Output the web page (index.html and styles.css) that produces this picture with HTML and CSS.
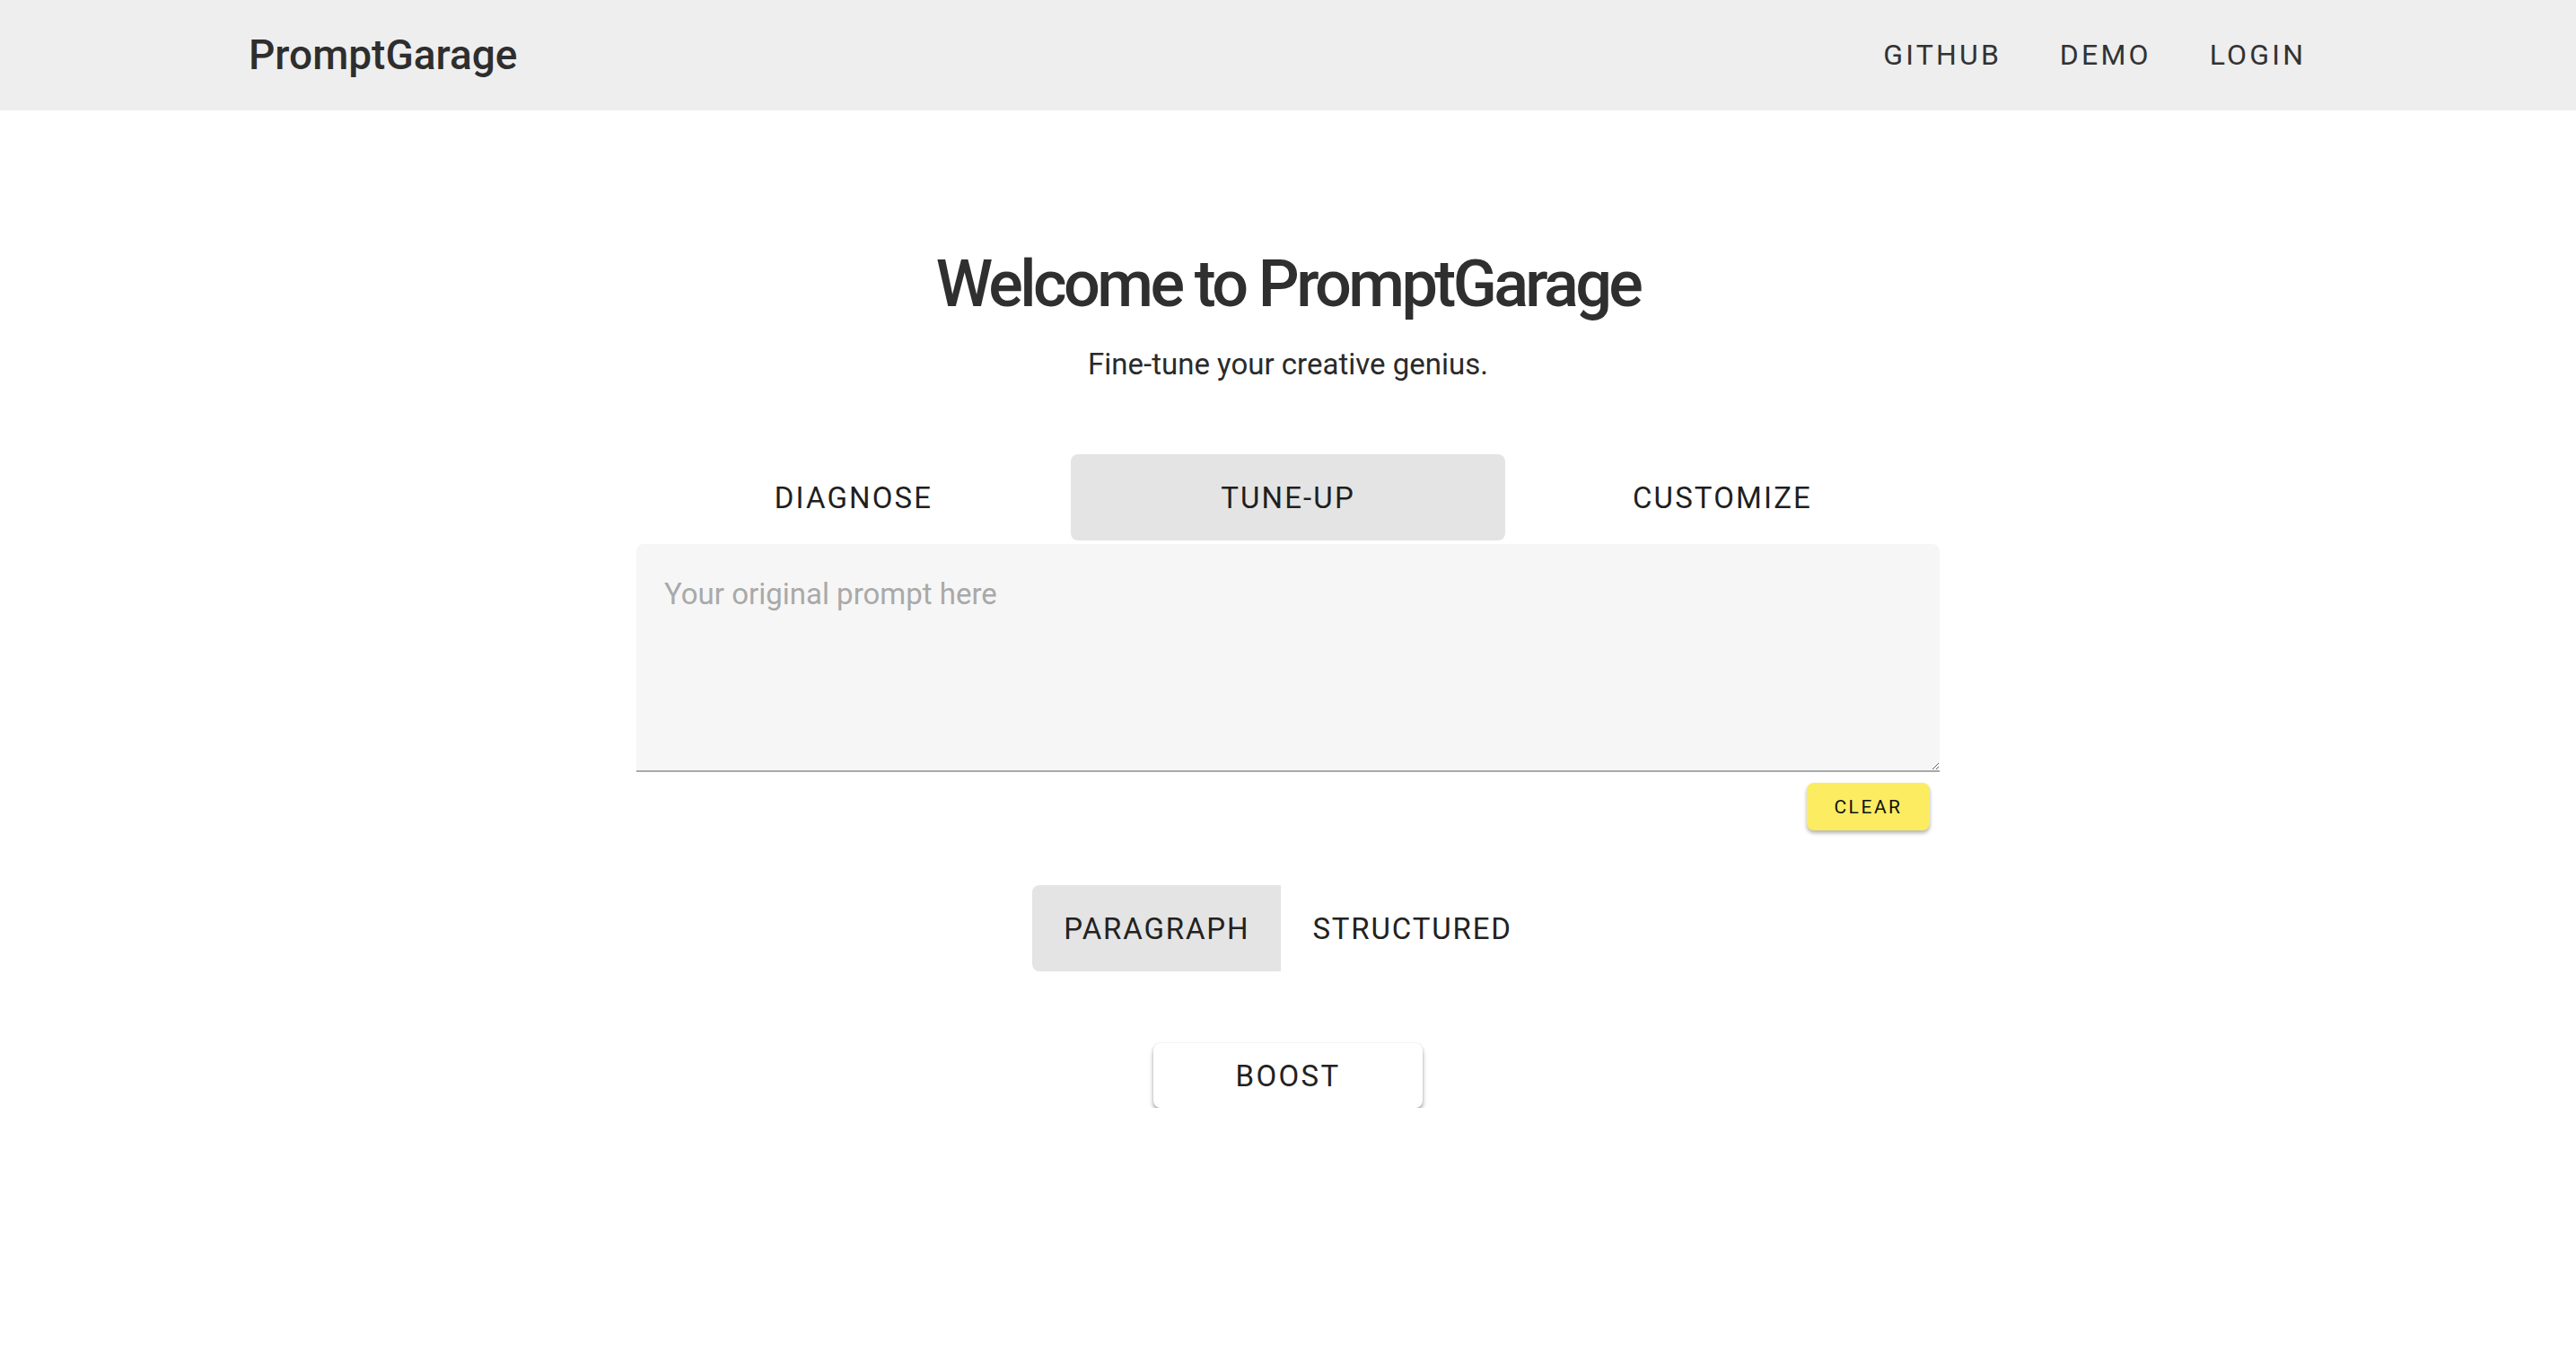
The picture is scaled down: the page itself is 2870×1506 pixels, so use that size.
FILE: index.html
```html
<!DOCTYPE html>
<html lang="en">
<head>
<meta charset="utf-8">
<title>PromptGarage</title>
<link rel="stylesheet" href="styles.css">
</head>
<body>
<header class="topbar">
  <div class="logo">PromptGarage</div>
  <nav class="nav">
    <a class="nav-link">GITHUB</a>
    <a class="nav-link">DEMO</a>
    <a class="nav-link">LOGIN</a>
  </nav>
</header>
<main class="main">
  <h1 class="title">Welcome to PromptGarage</h1>
  <p class="subtitle">Fine-tune your creative genius.</p>
  <section class="panel">
    <div class="tabs">
      <button class="tab">DIAGNOSE</button>
      <button class="tab tab-active">TUNE-UP</button>
      <button class="tab">CUSTOMIZE</button>
    </div>
    <textarea class="prompt" placeholder="Your original prompt here"></textarea>
    <div class="clear-row">
      <button class="clear-btn">CLEAR</button>
    </div>
  </section>
  <div class="toggle">
    <button class="toggle-btn toggle-active">PARAGRAPH</button>
    <button class="toggle-btn">STRUCTURED</button>
  </div>
  <button class="boost">BOOST</button>
</main>
</body>
</html>
```
FILE: styles.css
```css
html, body {
  margin: 0;
  padding: 0;
  background: #ffffff;
}
body {
  font-family: Roboto, "Liberation Sans", sans-serif;
  color: #333333;
}
button {
  font-family: inherit;
  border: none;
  background: none;
  cursor: pointer;
  padding: 0;
  margin: 0;
}
.topbar {
  height: 123px;
  background: #eeeeee;
  display: flex;
  align-items: center;
  justify-content: space-between;
  padding: 0 304px 0 277px;
}
.logo {
  font-size: 46px;
  font-weight: 500;
  letter-spacing: 0;
  color: #2e2e2e;
  line-height: 1;
  margin-top: -2px;
}
.nav {
  display: flex;
  gap: 68px;
  align-items: center;
}
.nav-link {
  font-size: 32px;
  letter-spacing: 0.1em;
  margin-right: -0.1em;
  color: #333;
  line-height: 1;
  margin-top: -2px;
}
.main {
  display: flex;
  flex-direction: column;
  align-items: center;
  padding-top: 151px;
}
.title {
  margin: 0;
  font-size: 72px;
  line-height: 86px;
  font-weight: 500;
  letter-spacing: -0.05em;
  color: #2f2f2f;
}
.subtitle {
  margin: 27px 0 0 0;
  font-size: 33px;
  line-height: 38px;
  color: #2a2a2a;
}
.panel {
  width: 1452px;
  margin-top: 81px;
  display: flex;
  flex-direction: column;
}
.tabs {
  display: grid;
  grid-template-columns: repeat(3, 1fr);
}
.tab {
  height: 96px;
  font-size: 33px;
  letter-spacing: 0.065em;
  color: #1f1f1f;
  border-radius: 8px;
}
.tab-active {
  background: #e4e4e4;
}
.prompt {
  margin-top: 4px;
  height: 254px;
  box-sizing: border-box;
  background: #f6f6f6;
  border: none;
  border-bottom: 2px solid #a9a9a9;
  border-radius: 8px 8px 0 0;
  padding: 31px 31px;
  font-family: inherit;
  font-size: 33px;
  line-height: 1.5;
  color: #333;
  outline: none;
  resize: vertical;
}
.prompt::placeholder {
  color: #a9a9a9;
}
.clear-row {
  display: flex;
  justify-content: flex-end;
  padding-right: 11px;
  margin-top: 12px;
}
.clear-btn {
  width: 137px;
  height: 53px;
  background: #fcec62;
  border-radius: 8px;
  font-size: 21px;
  letter-spacing: 0.12em;
  color: #111;
  box-shadow: 0 3px 4px rgba(0,0,0,0.3);
}
.toggle {
  display: flex;
  margin-top: 61px;
}
.toggle-btn {
  height: 96px;
  padding: 0 35px;
  font-size: 33px;
  letter-spacing: 0.056em;
  color: #222;
}
.toggle-active {
  background: #e4e4e4;
  border-radius: 8px 0 0 8px;
}
.boost {
  margin-top: 80px;
  width: 300px;
  height: 72px;
  background: #ffffff;
  border-radius: 8px;
  font-size: 33px;
  letter-spacing: 0.07em;
  color: #222;
  box-shadow: 0 4px 5px rgba(0,0,0,0.35), 0 0 2px rgba(0,0,0,0.12);
}
```
